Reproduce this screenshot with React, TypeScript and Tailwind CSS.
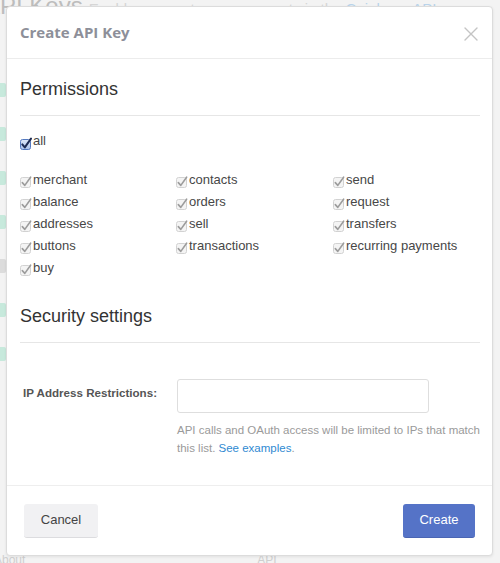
import React from "react";

const GrayCheck = () => (
  <svg width="13" height="14" viewBox="0 0 13 14" className="shrink-0">
    <rect x="0.5" y="3.5" width="10" height="10" rx="2" fill="#f4f4f4" stroke="#d2d2d2" />
    <path d="M2.3 8.6 L4.8 11.4 L10.6 3.2" fill="none" stroke="#9c9c9c" strokeWidth="1.6" strokeLinecap="round" strokeLinejoin="round" />
  </svg>
);

const BlueCheck = () => (
  <svg width="13" height="14" viewBox="0 0 13 14" className="shrink-0">
    <defs>
      <linearGradient id="bg" x1="0" y1="0" x2="0" y2="1">
        <stop offset="0" stopColor="#dfe8f8" />
        <stop offset="1" stopColor="#a9c1ea" />
      </linearGradient>
    </defs>
    <rect x="0.5" y="3.5" width="10" height="10" rx="2" fill="url(#bg)" stroke="#5479bf" />
    <path d="M2.3 8.4 L4.8 11.4 L11 2.6" fill="none" stroke="#1d2b52" strokeWidth="2" strokeLinecap="round" strokeLinejoin="round" />
  </svg>
);

const Item = ({ label }: { label: string }) => (
  <div className="flex items-center h-[22px]">
    <GrayCheck />
    <span className="text-[13px] text-[#474747] leading-[22px] -mt-[2px]">{label}</span>
  </div>
);

const cols: string[][] = [
  ["merchant", "contacts", "send"],
  ["balance", "orders", "request"],
  ["addresses", "sell", "transfers"],
  ["buttons", "transactions", "recurring payments"],
  ["buy"],
];

const Tag = () => (
  <div className="w-[6px] h-[14px] bg-[#c7e9dc] rounded-r-[2px]" />
);

export default function App() {
  return (
    <div
      className="relative w-[500px] h-[563px] overflow-hidden bg-[#f3f3f3]"
      style={{ fontFamily: '"Liberation Sans", Arial, sans-serif' }}
    >
      {/* faded background page */}
      <div className="flex items-baseline gap-[6px] -ml-[16px] -mt-[12px] h-[20px] whitespace-nowrap">
        <span className="text-[24px] text-[#bdbdbd]">API Keys</span>
        <span className="text-[15px] text-[#d6d6d6]">
          Enable access to your account via the <span className="text-[#b9d3ea]">Coinbase API</span>
        </span>
      </div>
      <div className="flex flex-col gap-[30px] mt-[75px]">
        <Tag />
        <Tag />
        <Tag />
        <Tag />
        <div className="w-[6px] h-[14px] bg-[#dcdcdc] rounded-r-[2px]" />
        <Tag />
        <Tag />
      </div>
      <div className="absolute left-0 bottom-[-6px] flex w-full text-[12px] text-[#cfcfcf]">
        <span className="-ml-[6px]">About</span>
        <span className="ml-[232px]">API</span>
      </div>

      {/* modal */}
      <div className="absolute left-[6px] top-[6px] w-[487px] h-[550px] bg-white border border-[#dcdcdc] rounded-[4px] shadow-[0_1px_3px_rgba(0,0,0,0.08)] flex flex-col">
        <div className="flex items-center justify-between h-[52px] pl-[13px] pr-[14px] border-b border-[#ececec]">
          <span
            className="text-[15px] font-bold text-[#8d8f99]"
            style={{ fontFamily: '"Open Sans", "Liberation Sans", sans-serif' }}
          >
            Create API Key
          </span>
          <svg width="14" height="14" viewBox="0 0 14 14" className="mt-[3px]">
            <path d="M1 1 L13 13 M13 1 L1 13" stroke="#c4c4c4" strokeWidth="1.4" strokeLinecap="round" />
          </svg>
        </div>

        <div className="flex-1 pl-[13px] pr-[12px] pt-[19px]">
          <div className="text-[18px] text-[#333] leading-[22px] pb-[15px] border-b border-[#e6e6e6]">
            Permissions
          </div>
          <div className="flex items-center h-[22px] mt-[16px]">
            <BlueCheck />
            <span className="text-[13px] text-[#474747] leading-[22px] -mt-[4px]">all</span>
          </div>
          <div className="grid grid-cols-[156px_157px_1fr] mt-[16px]">
            {cols.flat().map((l) => (
              <Item key={l} label={l} />
            ))}
          </div>

          <div className="text-[18px] text-[#333] leading-[22px] pb-[15px] border-b border-[#e6e6e6] mt-[25px]">
            Security settings
          </div>

          <div className="flex mt-[36px]">
            <div className="w-[157px] shrink-0 pl-[3px] pt-[5px] text-[11.6px] font-bold text-[#555]">
              IP Address Restrictions:
            </div>
            <div className="flex flex-col">
              <div className="w-[252px] h-[34px] border border-[#dedede] rounded-[3px] bg-white" />
              <p className="mt-[8px] w-[310px] text-[11.5px] leading-[18px] text-[#9a9a9a]">
                API calls and OAuth access will be limited to IPs that match this list.{" "}
                <span className="text-[#2f8ad2]">See examples</span>.
              </p>
            </div>
          </div>
        </div>

        <div className="flex items-center justify-between h-[70px] px-[17px] border-t border-[#eeeeee]">
          <button className="w-[74px] h-[34px] rounded-[3px] bg-[#f1f1f3] border-b border-[#dcdcdf] text-[13px] text-[#444]">
            Cancel
          </button>
          <button className="w-[72px] h-[34px] rounded-[3px] bg-[#5573c7] border-b border-[#4a65b3] text-[13px] text-white">
            Create
          </button>
        </div>
      </div>
    </div>
  );
}
